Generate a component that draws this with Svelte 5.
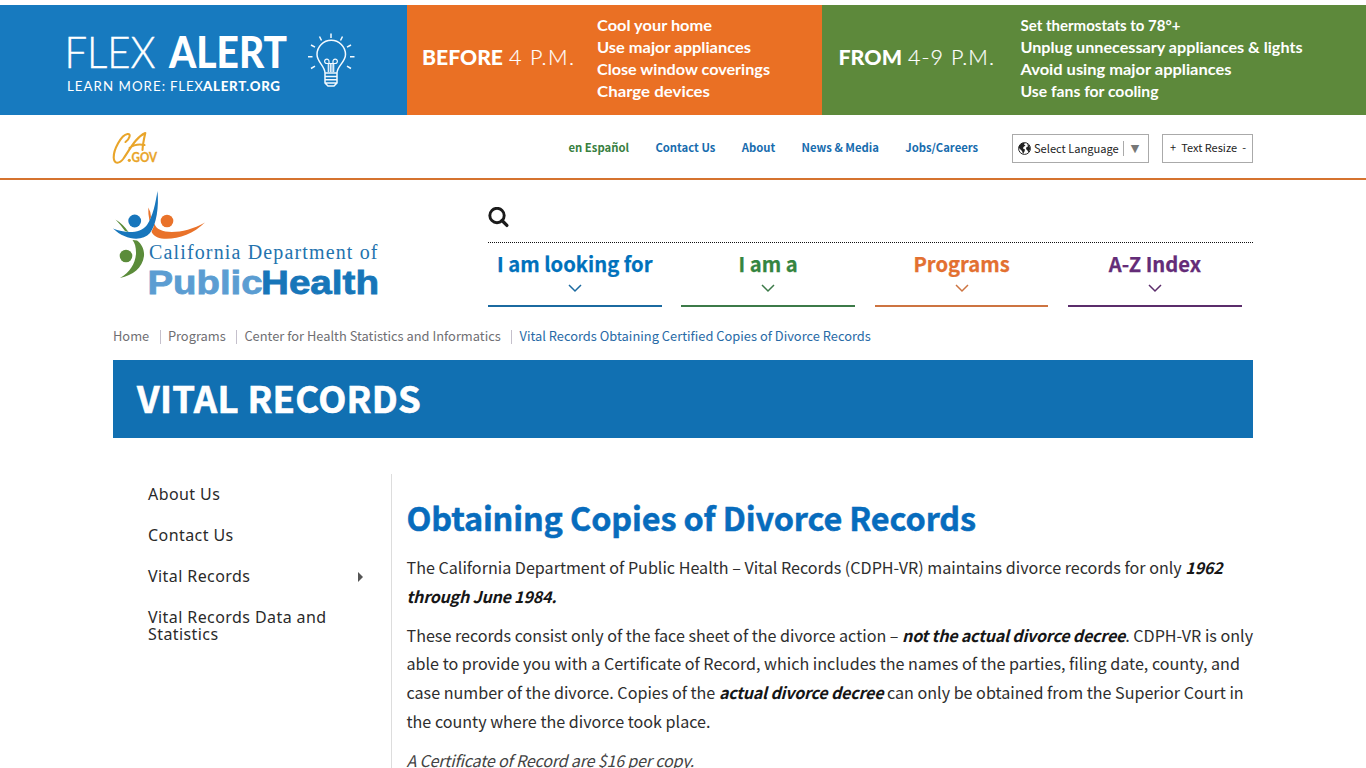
<script>
  const links = ['Contact Us', 'About', 'News & Media', 'Jobs/Careers'];
  const nav = [
    { label: 'I am looking for', color: '#0071bc', line: '#1b6aa0' },
    { label: 'I am a', color: '#358540', line: '#3c7a48' },
    { label: 'Programs', color: '#e37031', line: '#cd7441' },
    { label: 'A-Z Index', color: '#642c78', line: '#5b2d6b' }
  ];
  const before = [
    ['Cool your home', 115], ['Use major appliances', 154],
    ['Close window coverings', 173], ['Charge devices', 113]
  ];
  const from = [
    ['Set thermostats to 78°+', 160], ['Unplug unnecessary appliances & lights', 282],
    ['Avoid using major appliances', 211], ['Use fans for cooling', 138]
  ];
</script>

<div class="alert">
  <svg class="blue" width="407" height="110" viewBox="0 5 407 110">
    <g fill="#fff" font-family="Lato, sans-serif">
      <text x="64.500" y="68" font-size="43" font-weight="300" textLength="91" lengthAdjust="spacingAndGlyphs" stroke="#fff" stroke-width=".4">FLEX</text>
      <text x="169" y="68" font-size="43" font-weight="900" textLength="118" lengthAdjust="spacingAndGlyphs">ALERT</text>
      <text x="67" y="90.500" font-size="13.300" font-weight="400" textLength="98" lengthAdjust="spacing">LEARN MORE:</text>
      <text x="170" y="90.500" font-size="13.300" font-weight="400" textLength="33" lengthAdjust="spacing">FLEX</text>
      <text x="203" y="90.500" font-size="13.300" font-weight="900" textLength="77" lengthAdjust="spacing">ALERT.ORG</text>
    </g>
    <g fill="none" stroke="#f4faff" stroke-width="1.500">
      <path d="M325 73C325 66 317 62 317 54.500A14.200 14.200 0 0 1 345.500 54.500C345.500 62 337 66 337 73ZM325 73V83L328 86H334L337 83V73M325 76.500H337M325 79.800H337M325 83H337" />
      <path d="M328.300 72V63.500H327A2.200 2.200 0 1 1 329 61.500V63M333.700 72V63.500H335A2.200 2.200 0 1 0 333 61.500V63M328 63.500H334M330.300 72V64M332 72V64" stroke-width="1.200" />
      <path d="M331 33.500V38M319.500 36.500L321.500 40.500M342.500 36.500L340.500 40.500M311 45L315 47.200M351 45L347 47.200M308 56.800H312.500M350 56.800H354.500M311 68.500L315 66.200M351 68.500L347 66.200" />
    </g>
  </svg>
  <svg class="orange" width="415" height="110" viewBox="407 5 415 110">
    <g fill="#fff" font-family="Lato, sans-serif">
      <text x="422" y="64.500" font-size="21.500" font-weight="900" textLength="81" lengthAdjust="spacingAndGlyphs">BEFORE</text>
      <text x="509" y="64.500" font-size="21.500" font-weight="300" textLength="65" lengthAdjust="spacing" stroke="#fff" stroke-width=".2">4 P.M.</text>
      {#each before as [text, width], i}
        <text x="597" y={30.5 + i * 22} font-size="15" font-weight="700" textLength={width} lengthAdjust="spacingAndGlyphs">{text}</text>
      {/each}
    </g>
  </svg>
  <svg class="green" width="544" height="110" viewBox="822 5 544 110">
    <g fill="#fff" font-family="Lato, sans-serif">
      <text x="838.500" y="64.500" font-size="21.500" font-weight="900" textLength="63.500" lengthAdjust="spacingAndGlyphs">FROM</text>
      <text x="908" y="64.500" font-size="21.500" font-weight="300" textLength="86" lengthAdjust="spacing" stroke="#fff" stroke-width=".2">4-9 P.M.</text>
      {#each from as [text, width], i}
        <text x="1020.500" y={30.5 + i * 22} font-size="15" font-weight="700" textLength={width} lengthAdjust="spacingAndGlyphs">{text}</text>
      {/each}
    </g>
  </svg>
</div>

<div class="utility">
  <div class="wrap bar">
    <svg class="ca" width="46" height="36" viewBox="112 130 46 36">
      <g fill="none" stroke="#e9a52a" stroke-linecap="round" stroke-linejoin="round">
        <path stroke-width="2.100" d="M125.500 142C129.500 139 131.500 133.500 127.500 134C121 135 113.500 150 113.700 157.500C114 164.500 119.500 164 123.500 158.500C130 149 136 137 145.300 133C144 138.500 142.800 144.500 142.500 150M129.500 148C134 144.500 139.500 144 144.500 145" />
      </g>
      <circle cx="129.300" cy="160.300" r="1.600" fill="#e9a52a" />
      <text x="131.500" y="161.800" font-family="Lato, sans-serif" font-size="13" font-weight="700" fill="#e9a52a" stroke="#e9a52a" stroke-width=".3" textLength="25.500" lengthAdjust="spacingAndGlyphs">GOV</text>
    </svg>
    <nav class="links">
      <a class="es" href="#es">en Español</a>
      {#each links as link}<a href="#top">{link}</a>{/each}
    </nav>
    <div class="language">
      <svg width="13" height="13" viewBox="0 0 13 13">
        <circle cx="6.500" cy="6.500" r="5.900" fill="#fff" stroke="#222" />
        <path fill="#222" d="M1 4L3.500 1.200L7 .7L6 2.500L7.500 3.500L5.500 5L5 6.500L7 7.500L6.500 9.500L5 12L4 9L2.500 7.500L.8 6ZM9 1.500L11.500 4L12.200 7L10.500 10.500L9.500 8.500L8 7L8.500 5L10 4.500Z" />
      </svg>
      <span class="select">Select Language</span><span class="arrow">▼</span>
    </div>
    <div class="resize"><span>+</span><span>Text Resize</span><span>-</span></div>
  </div>
</div>

<header class="wrap head">
  <svg class="logo" width="270" height="112" viewBox="113 188 270 112">
    <path fill="#5b8c3a" d="M115.500 219.500Q123 224 128.500 232L125 231Q120 224 115.500 219.500ZM132.500 240L137 240.500C142 244 144.500 250 144 256C142.500 268 133 275 120 278C130 272 135 264 136 254C136.200 248 135 243 132.500 240Z" />
    <circle cx="126" cy="256" r="6.300" fill="#5b8c3a" />
    <path fill="#e9722a" d="M148.300 207.500Q151 212 151 217L149.500 221Q148 214 148.300 207.500ZM154.500 223.500C157 235 183 235 205 222.500C193 234 178 239.500 164 238.800C157 238.500 152.500 235 151.500 231.500Q153.500 228 154.500 223.500Z" />
    <circle cx="167" cy="221" r="6.300" fill="#e9722a" />
    <path fill="#1776bc" d="M157.500 191C159 207 156.500 224 150 233C142 242 125 240 113 228.500C125 233.500 140 234 147 225C153 216 155.500 203 157.500 191Z" />
    <circle cx="134.700" cy="221" r="6.400" fill="#1776bc" />
    <text x="149" y="259" font-family="Liberation Serif, serif" font-size="20" fill="#2373ae" textLength="228.500" lengthAdjust="spacing">California Department of</text>
    <text x="147.500" y="293.800" font-family="Liberation Sans, sans-serif" font-size="33.500" font-weight="700" fill="#5b9dd2" stroke="#5b9dd2" stroke-width=".8" textLength="115" lengthAdjust="spacingAndGlyphs">Public</text>
    <text x="261" y="293.800" font-family="Liberation Sans, sans-serif" font-size="33.500" font-weight="700" fill="#1776b9" stroke="#1776b9" stroke-width=".8" textLength="118" lengthAdjust="spacingAndGlyphs">Health</text>
  </svg>
  <div class="menu">
    <div class="search">
      <svg width="22" height="22" viewBox="0 0 22 22" fill="none" stroke="#1b1b1b">
        <circle cx="9" cy="9" r="7.200" stroke-width="2.900" />
        <path d="M14 14L18.900 18.900" stroke-width="3.300" stroke-linecap="round" />
      </svg>
    </div>
    <nav class="main-nav">
      {#each nav as item}
        <a href="#top" style="color: {item.color}; border-color: {item.line}">
          <span>{item.label}</span>
          <svg width="14" height="9" viewBox="0 0 14 9" fill="none" stroke={item.line} stroke-width="1.500"><path d="M1 1L7 7L13 1" /></svg>
        </a>
      {/each}
    </nav>
  </div>
</header>

<div class="wrap">
  <nav class="crumbs">
    <a href="#top">Home</a><a href="#top">Programs</a><a href="#top">Center for Health Statistics and Informatics</a><a class="current" href="#top">Vital Records Obtaining Certified Copies of Divorce Records</a>
  </nav>
  <div class="title"><h1>VITAL RECORDS</h1></div>
  <div class="columns">
    <aside>
      <a href="#top">About Us</a>
      <a href="#top">Contact Us</a>
      <a href="#top" class="more">Vital Records</a>
      <a href="#top">Vital Records Data and Statistics</a>
    </aside>
    <main>
      <h2>Obtaining Copies of Divorce Records</h2>
      <p>The California Department of Public Health – Vital Records (CDPH-VR) maintains divorce records for only <b>1962</b><br /><b>through June 1984.</b></p>
      <p>These records consist only of the face sheet of the divorce action – <b>not the actual divorce decree</b>. CDPH-VR is only<br />able to provide you with a Certificate of Record, which includes the names of the parties, filing date, county, and<br />case number of the divorce. Copies of the <b>actual divorce decree</b> can only be obtained from the Superior Court in<br />the county where the divorce took place.</p>
      <p class="note">A Certificate of Record are $16 per copy.</p>
    </main>
  </div>
</div>

<style>
  :global(html), :global(body) { height: 768px; overflow: hidden; background: #fff; }
  :global(body) { margin: 0; font-family: "Noto Sans CJK SC", sans-serif; color: #222; }
  a { text-decoration: none; color: inherit; white-space: nowrap; }
  svg { display: block; flex: none; }
  .wrap { width: 1140px; margin-left: 113px; }
  .alert { display: flex; padding-top: 5px; height: 110px; }
  .blue { background: #177abf; }
  .orange { background: #ea7024; }
  .green { background: #5d893b; }
  .utility { height: 63px; border-bottom: 2px solid #d5732f; }
  .bar { display: flex; height: 63px; }
  .ca { margin: 15px 0 0 -1px; }
  .links { display: flex; gap: 26.3px; margin: 22px 0 0 410.5px; font-size: 11.3px; font-weight: 700; line-height: 20px; color: #176cae; width: 443.5px; }
  .es { color: #38803f; }
  .language, .resize { box-sizing: border-box; border: 1px solid #aaa; height: 29px; margin-top: 19px; display: flex; align-items: center; white-space: nowrap; }
  .language { width: 137px; padding-left: 4.5px; font-size: 12px; }
  .select { margin-left: 3.5px; padding-right: 4px; border-right: 1px solid #aaa; line-height: 15px; font-size: 11.1px; }
  .arrow { margin-left: 7px; font: 11px "DejaVu Sans", sans-serif; color: #777; }
  .resize { width: 91px; margin-left: 13px; padding: 0 6px 2px 7px; font-size: 11px; line-height: 15px; justify-content: space-between; }
  .head { display: flex; height: 134px; }
  .logo { margin-top: 8px; }
  .menu { width: 765px; margin-left: 105px; }
  .search { height: 62px; border-bottom: 1px dotted #111; }
  .search svg { padding-top: 26.5px; }
  .main-nav { display: grid; grid-template-columns: repeat(4, 173.5px); column-gap: 19.9px; }
  .main-nav a { display: flex; flex-direction: column; align-items: center; height: 62px; border-bottom: 2px solid; font-size: 20.2px; font-weight: 700; line-height: 41px; }
  .main-nav span { -webkit-text-stroke: .25px currentColor; }
  .crumbs { display: flex; height: 46px; font-size: 12.87px; line-height: 44px; color: #6f6f73; }
  .crumbs a { display: flex; height: 44px; align-items: center; }
  .crumbs a + a::before { content: ""; width: 1px; height: 14px; margin: 2px 7px 0 10.7px; background: #c5c0cc; }
  .crumbs .current { color: #286aa6; letter-spacing: .01px; }
  .title { height: 78px; background: #1170b2; color: #fff; }
  h1 { margin: 0; padding-left: 24px; font-size: 36.5px; line-height: 75px; font-weight: 700; letter-spacing: .3px; -webkit-text-stroke: .6px #fff; }
  .columns { display: flex; margin-top: 36px; height: 294px; }
  aside { box-sizing: border-box; width: 279px; border-right: 1px solid #ddd; padding: 12px 26px 0 35px; font: 16px/17px "Noto Sans", sans-serif; letter-spacing: .42px; color: #2a2a2a; }
  aside a { display: block; white-space: normal; margin-bottom: 24px; }
  aside .more { display: flex; justify-content: space-between; align-items: center; }
  .more::after { content: ""; border-left: 5px solid #555; border-top: 5px solid transparent; border-bottom: 5px solid transparent; margin-right: 2px; }
  main { padding-left: 14.5px; width: 861px; box-sizing: border-box; white-space: nowrap; }
  h2 { margin: 0; padding-top: 19px; height: 49.600px; font-size: 32.4px; line-height: 48px; letter-spacing: -.13px; color: #076cbd; -webkit-text-stroke: .5px #076cbd; }
  p { margin: 10.5px 0 0; font-size: 16.11px; line-height: 28.6px; color: #2e2e2e; }
  b { font-style: italic; color: #161616; letter-spacing: -.23px; }
  .note { font-style: italic; color: #444; letter-spacing: -.2px; }
</style>
